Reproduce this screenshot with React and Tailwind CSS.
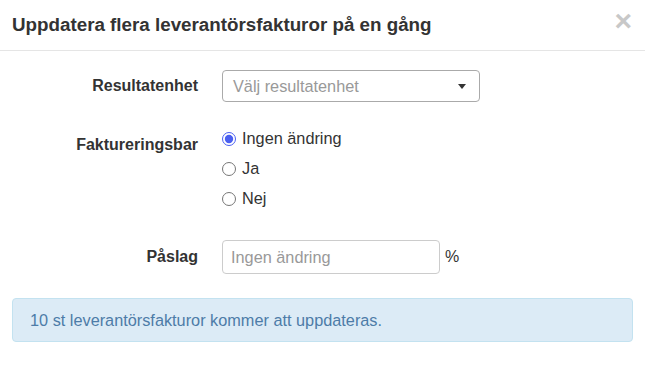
export default function App() {
  return (
    <div className="w-[645px] h-[369px] bg-white text-[#333] font-['Liberation_Sans',Arial,sans-serif]">
      <div className="flex h-[51px] items-center justify-between border-b border-[#e5e5e5] pl-3 pr-[13px]">
        <h4 className="text-[18.8px] font-bold leading-none">Uppdatera flera leverantörsfakturor på en gång</h4>
        <button className="-mt-[8px] text-[30px] font-bold leading-none text-[#c8c8c8]">×</button>
      </div>

      <div className="px-3 pt-[19px]">
        <div className="flex items-center gap-6">
          <label className="w-[186px] text-right text-[16px] font-bold">Resultatenhet</label>
          <div className="flex h-8 w-[258px] items-center justify-between rounded border border-[#aaaaaa] pl-[10px] pr-[13px]">
            <span className="text-[16.3px] text-[#999]">Välj resultatenhet</span>
            <span className="h-0 w-0 border-x-[4px] border-t-[5px] border-x-transparent border-t-[#333]" />
          </div>
        </div>

        <div className="mt-[22px] flex items-start gap-6">
          <label className="w-[186px] pt-[11px] text-right text-[16px] font-bold leading-5">Faktureringsbar</label>
          <div className="flex flex-col">
            {['Ingen ändring', 'Ja', 'Nej'].map((t, i) => (
              <label key={t} className="flex h-[30px] items-center gap-[6px] text-[16.3px]">
                <input type="radio" name="fakt" defaultChecked={i === 0} className="m-0 h-[14px] w-[14px] accent-[#4a5ff0]" />
                <span className="-mt-[1px]">{t}</span>
              </label>
            ))}
          </div>
        </div>

        <div className="mt-[26px] flex items-center gap-6">
          <label className="w-[186px] text-right text-[16px] font-bold">Påslag</label>
          <div className="flex items-center gap-[5px]">
            <input
              placeholder="Ingen ändring"
              className="h-[34px] w-[218px] rounded border border-[#cccccc] px-2 text-[16.3px] placeholder:text-[#999] outline-none"
            />
            <span className="text-[16px]">%</span>
          </div>
        </div>

        <div className="mt-6 flex h-11 items-center rounded border border-[#c3e2f0] bg-[#dcebf6] px-[17px] text-[16.3px] text-[#4d7ca8]">
          10 st leverantörsfakturor kommer att uppdateras.
        </div>
      </div>
    </div>
  )
}
